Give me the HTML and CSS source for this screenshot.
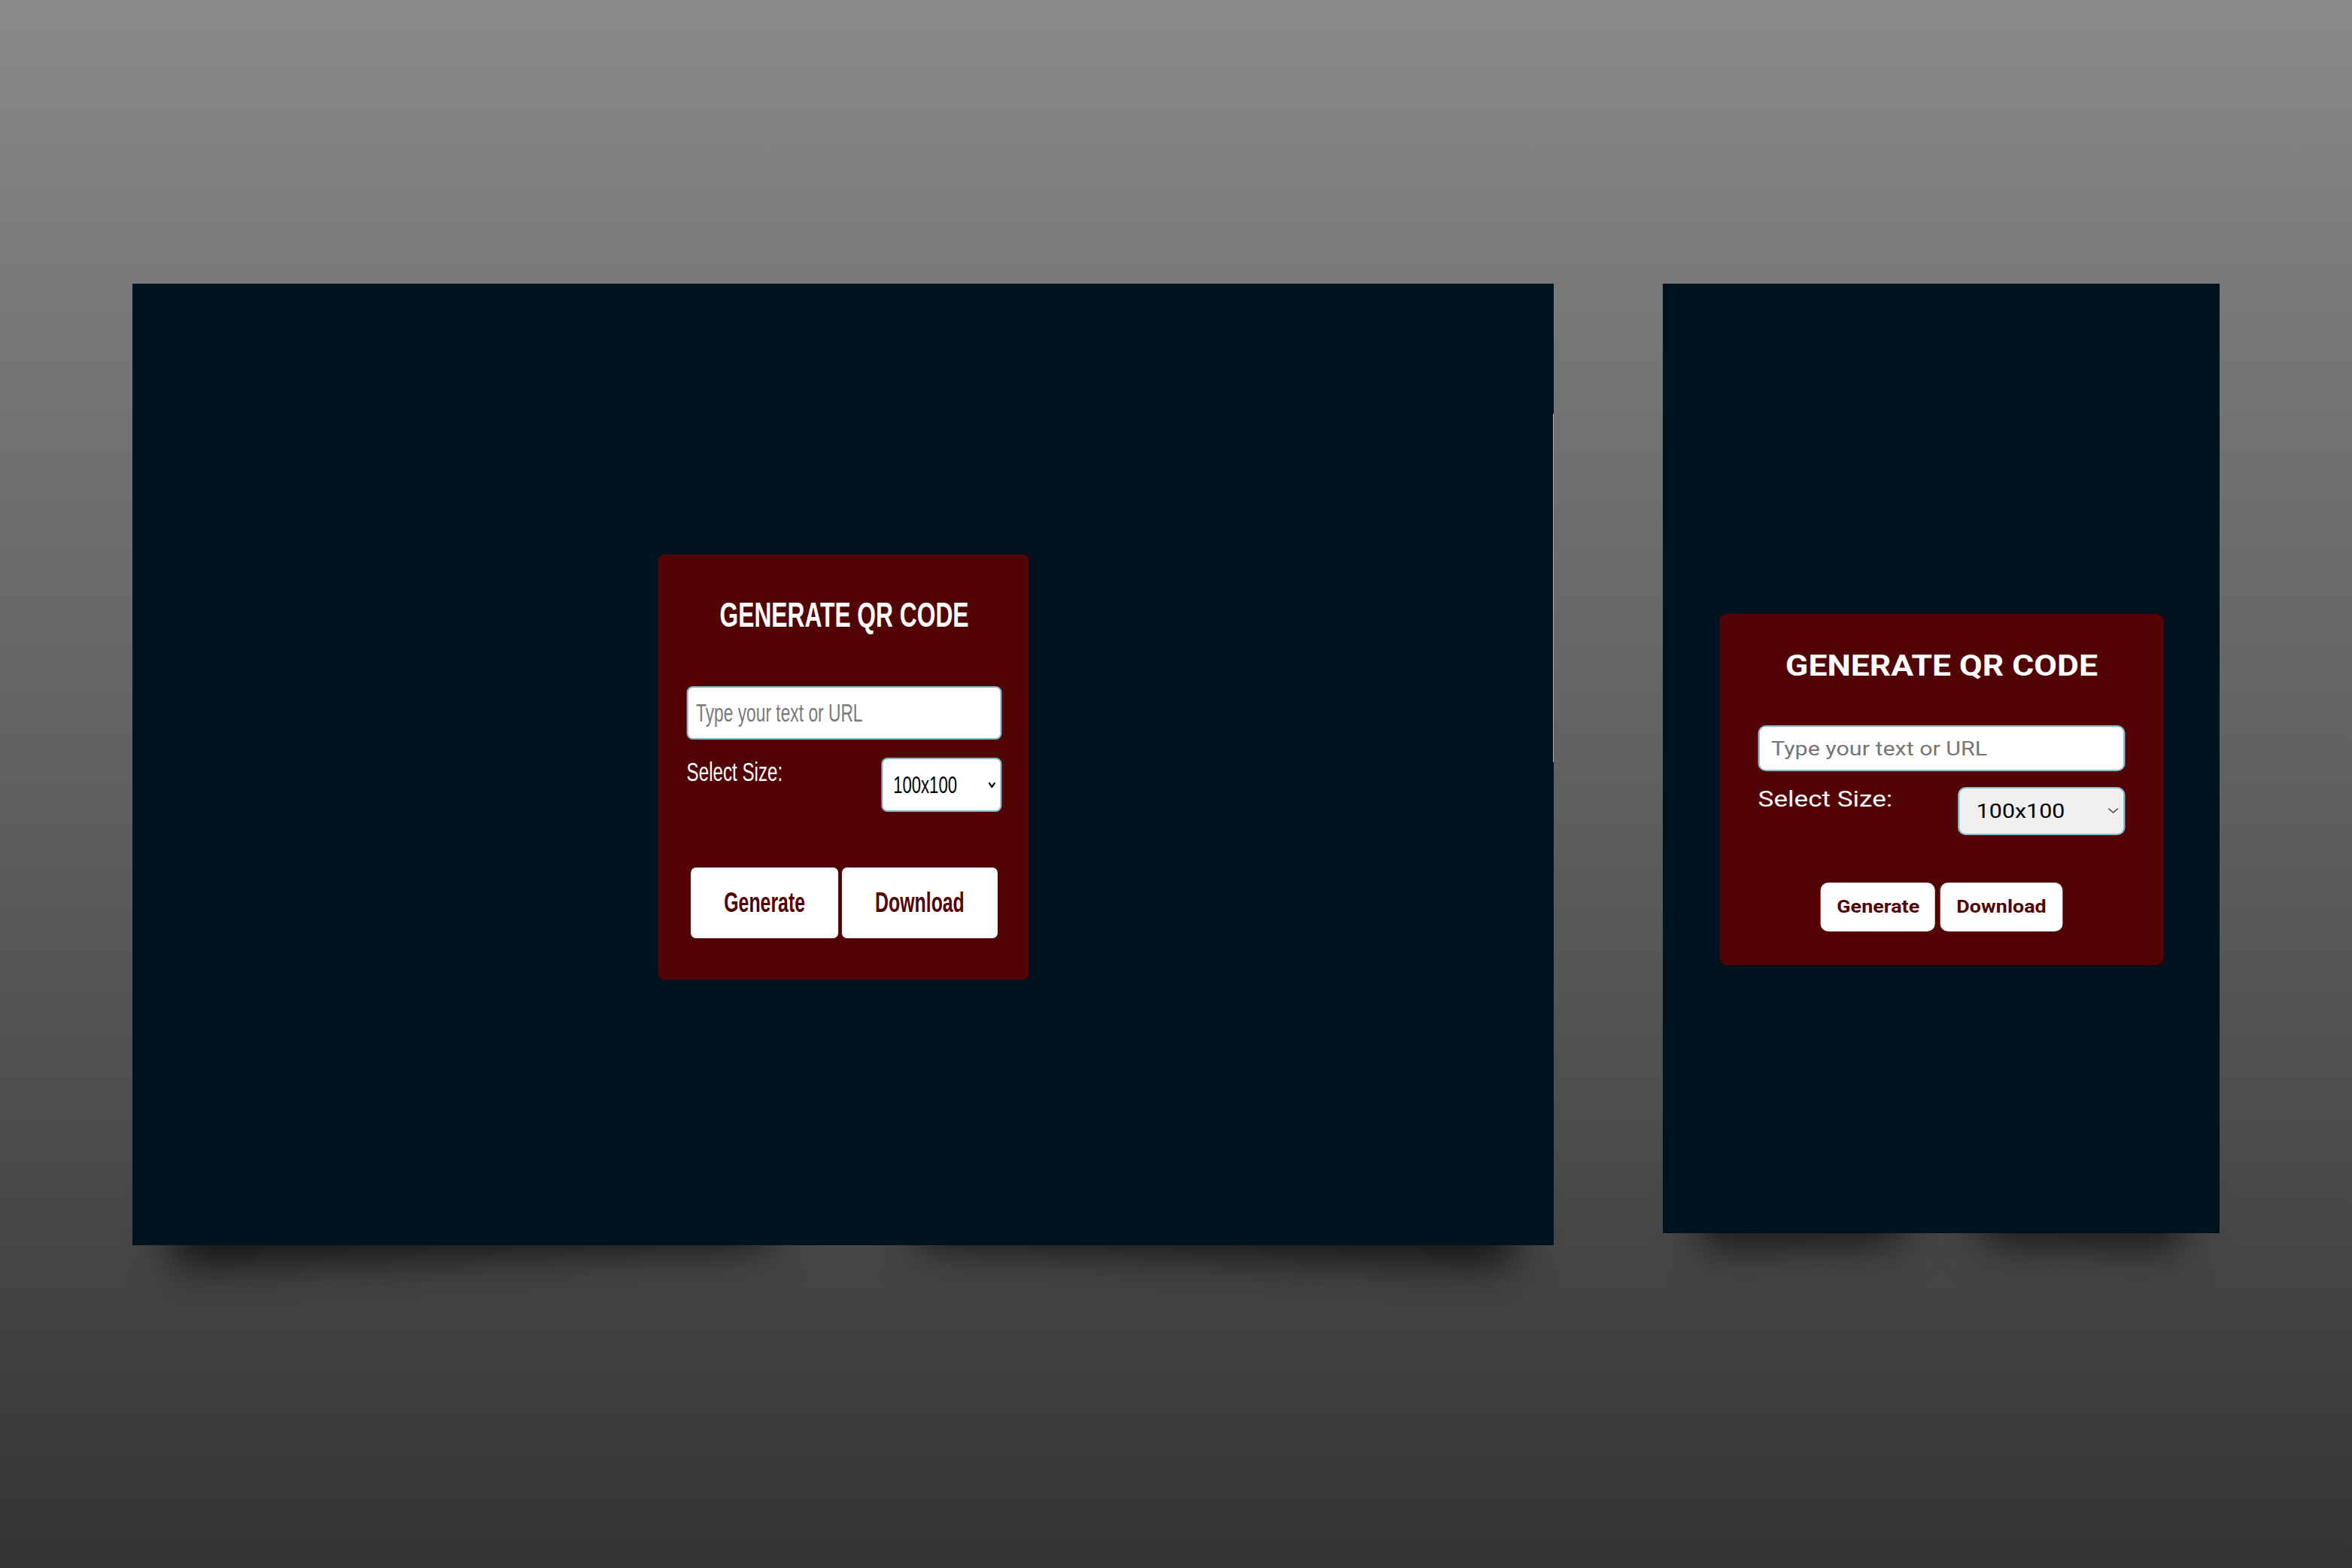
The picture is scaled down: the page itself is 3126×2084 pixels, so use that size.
FILE: index.html
```html
<!DOCTYPE html>
<html lang="en">
<head>
<meta charset="utf-8">
<title>Generate QR Code</title>
<link rel="stylesheet" href="styles.css">
</head>
<body>
<div class="stage">
  <section class="panel panel-desktop">
    <span class="edge"></span>
    <div class="card card-desktop">
      <h1 class="title">GENERATE QR CODE</h1>
      <input class="field" type="text" placeholder="Type your text or URL">
      <div class="row">
        <label class="label">Select Size:</label>
        <div class="select-wrap">
          <select class="select"><option>100x100</option></select>
          <svg class="chev" viewBox="0 0 14 9" width="14" height="9"><polyline points="2,2 7,7 12,2" fill="none" stroke="#000" stroke-width="2.6" stroke-linecap="round" stroke-linejoin="round"/></svg>
        </div>
      </div>
      <div class="actions">
        <button class="btn">Generate</button>
        <button class="btn">Download</button>
      </div>
    </div>
  </section>
  <section class="panel panel-mobile">
    <div class="card card-mobile">
      <h1 class="title">GENERATE QR CODE</h1>
      <input class="field" type="text" placeholder="Type your text or URL">
      <div class="row">
        <label class="label">Select Size:</label>
        <div class="select-wrap">
          <select class="select"><option>100x100</option></select>
          <svg class="chev" viewBox="0 0 13 7" width="13" height="7"><polyline points="1.5,1 6.5,6 11.5,1" fill="none" stroke="#444" stroke-width="1.3" stroke-linecap="round" stroke-linejoin="round"/></svg>
        </div>
      </div>
      <div class="actions">
        <button class="btn">Generate</button>
        <button class="btn">Download</button>
      </div>
    </div>
  </section>
</div>
</body>
</html>
```

FILE: styles.css
```css
html, body {
  margin: 0;
  padding: 0;
}

body {
  width: 3126px;
  height: 2084px;
  overflow: hidden;
}

.stage {
  width: 3126px;
  height: 2084px;
  box-sizing: border-box;
  padding-top: 377px;
  display: flex;
  align-items: flex-start;
  justify-content: center;
  gap: 145px;
  isolation: isolate;
  background: linear-gradient(to bottom, #8a8a8a 0%, #7a7a7a 17%, #606060 50%, #474747 78%, #343434 100%);
}

.panel {
  position: relative;
  box-sizing: border-box;
  display: flex;
  justify-content: center;
  align-items: flex-start;
  background: #01121f;
}

.panel::before,
.panel::after {
  content: "";
  position: absolute;
  z-index: -1;
  bottom: 70px;
  width: 42%;
  height: 80px;
  background: rgba(0, 0, 0, 0.5);
  box-shadow: 0 84px 56px rgba(0, 0, 0, 0.72);
}

.panel::before {
  left: 50px;
  transform: rotate(-2deg);
}

.panel::after {
  right: 50px;
  transform: rotate(2deg);
}

.panel-desktop {
  width: 1889px;
  height: 1278px;
  padding-top: 360px;
}

.panel-mobile {
  width: 740px;
  height: 1262px;
  padding-top: 439px;
}

.panel-mobile::before,
.panel-mobile::after {
  width: 36%;
}

.edge {
  position: absolute;
  right: 0;
  top: 173px;
  width: 1px;
  height: 463px;
  background: #a8a8a8;
}

.card {
  box-sizing: border-box;
  background: #520404;
  flex: none;
}

.title {
  margin: 0;
  color: #ffffff;
  font-weight: 700;
  text-align: center;
  white-space: nowrap;
}

.field {
  display: block;
  width: 100%;
  box-sizing: border-box;
  margin: 0;
  background: #ffffff;
  color: #000;
  outline: none;
  font-family: inherit;
}

.field::placeholder {
  color: #767676;
}

.row {
  display: flex;
  justify-content: space-between;
  align-items: flex-start;
}

.label {
  color: #ffffff;
  white-space: nowrap;
}

.select-wrap {
  position: relative;
  flex: none;
}

.select {
  display: block;
  box-sizing: border-box;
  margin: 0;
  appearance: none;
  -webkit-appearance: none;
  outline: none;
  color: #000;
  font-family: inherit;
}

.chev {
  position: absolute;
  top: 50%;
  display: block;
}

.actions {
  display: flex;
  justify-content: center;
}

.btn {
  margin: 0;
  border: none;
  background: #ffffff;
  color: #520404;
  font-family: inherit;
  font-weight: 700;
  white-space: nowrap;
}

/* Desktop screenshot (horizontally squeezed) */
.card-desktop {
  width: 714px;
  padding: 57px 52px 55px 55px;
  border-radius: 12px / 8px;
  transform: scaleX(0.69);
  transform-origin: 50% 0;
  font-family: "Liberation Sans", Arial, sans-serif;
}

.card-desktop .title {
  font-size: 46px;
  line-height: 46px;
  margin-bottom: 72px;
}

.card-desktop .field {
  height: 71px;
  border: solid #84b5c9;
  border-width: 2px 3px;
  border-radius: 12px / 8px;
  padding: 0 15px;
  font-size: 33px;
}

.card-desktop .field::placeholder {
  color: #7a7a7a;
}

.card-desktop .row {
  margin-top: 24px;
}

.card-desktop .label {
  font-size: 35px;
  line-height: 35px;
  margin-top: 1px;
}

.card-desktop .select {
  width: 232px;
  height: 72px;
  border: solid #84b5c9;
  border-width: 2px 3px;
  border-radius: 12px / 8px;
  padding: 0 0 0 20px;
  background: #ffffff;
  font-size: 32px;
}

.card-desktop .chev {
  right: 12px;
  margin-top: -4px;
}

.card-desktop .actions {
  margin-top: 74px;
  gap: 7px;
}

.card-desktop .btn {
  height: 94px;
  padding: 0 64px;
  border-radius: 10px / 7px;
  font-size: 36px;
}

/* Mobile screenshot (horizontally stretched) */
.card-mobile {
  width: 505px;
  padding: 50px 44px 45px 44px;
  border-radius: 9px / 10px;
  transform: scaleX(1.17);
  transform-origin: 50% 0;
  font-family: Roboto, "Noto Sans", sans-serif;
}

.card-mobile .title {
  font-size: 38px;
  line-height: 38px;
  margin-bottom: 60px;
}

.card-mobile .field {
  height: 61px;
  border: 2px solid #86bccf;
  border-radius: 9px / 10px;
  padding: 0 13px;
  font-size: 26px;
}

.card-mobile .row {
  margin-top: 21px;
}

.card-mobile .label {
  font-size: 30px;
  line-height: 30px;
  margin-top: 1px;
}

.card-mobile .select {
  width: 190px;
  height: 64px;
  border: 2px solid #86bccf;
  border-radius: 9px / 10px;
  padding: 0 0 0 19px;
  background: #efefef;
  font-size: 26px;
}

.card-mobile .chev {
  right: 7px;
  margin-top: -4px;
}

.card-mobile .actions {
  margin-top: 63px;
  gap: 6px;
}

.card-mobile .btn {
  height: 65px;
  padding: 0 18px;
  border-radius: 9px / 10px;
  font-size: 23px;
}
```
